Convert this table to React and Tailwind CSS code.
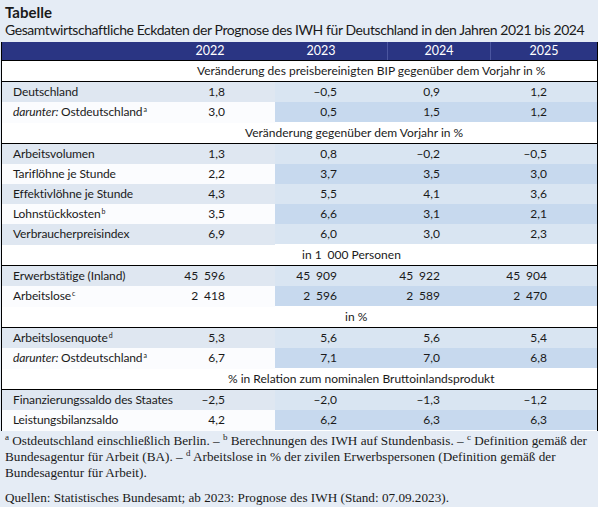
import React from 'react';

const sans = "font-['Lato',sans-serif]";

const rows = [
  { type: 'section', text: 'Veränderung des preisbereinigten BIP gegenüber dem Vorjahr in %', pl: 'pl-[195px]' },
  { label: 'Deutschland', v: ['1,8', '–0,5', '0,9', '1,2'] },
  { label: 'Ostdeutschland', pre: 'darunter:', sup: 'a', v: ['3,0', '0,5', '1,5', '1,2'] },
  { type: 'section', text: 'Veränderung gegenüber dem Vorjahr in %', pl: 'pl-[243px]' },
  { label: 'Arbeitsvolumen', v: ['1,3', '0,8', '–0,2', '–0,5'] },
  { label: 'Tariflöhne je Stunde', v: ['2,2', '3,7', '3,5', '3,0'] },
  { label: 'Effektivlöhne je Stunde', v: ['4,3', '5,5', '4,1', '3,6'] },
  { label: 'Lohnstückkosten', sup: 'b', v: ['3,5', '6,6', '3,1', '2,1'] },
  { label: 'Verbraucherpreisindex', v: ['6,9', '6,0', '3,0', '2,3'] },
  { type: 'section', text: 'in 1\u2002000 Personen', pl: 'pl-[300px]' },
  { label: 'Erwerbstätige (Inland)', v: ['45\u2002596', '45\u2002909', '45\u2002922', '45\u2002904'] },
  { label: 'Arbeitslose', sup: 'c', v: ['2\u2002418', '2\u2002596', '2\u2002589', '2\u2002470'] },
  { type: 'section', text: 'in %', pl: 'pl-[343px]' },
  { label: 'Arbeitslosenquote', sup: 'd', v: ['5,3', '5,6', '5,6', '5,4'] },
  { label: 'Ostdeutschland', pre: 'darunter:', sup: 'a', v: ['6,7', '7,1', '7,0', '6,8'] },
  { type: 'section', text: '% in Relation zum nominalen Bruttoinlandsprodukt', pl: 'pl-[226px]' },
  { label: 'Finanzierungssaldo des Staates', v: ['–2,5', '–2,0', '–1,3', '–1,2'] },
  { label: 'Leistungsbilanzsaldo', v: ['4,2', '6,2', '6,3', '6,3'] },
];

function Sup({ children, className = '' }) {
  return <span className={`relative -top-[4px] text-[7px] leading-none ${className}`}>{children}</span>;
}

function DataRow({ row, light }) {
  const base = light ? 'bg-[#dfe7f1]' : 'bg-[#fbfcfe]';
  const fc = light ? 'bg-[#d9e5f2]' : 'bg-[#c7d9ee]';
  return (
    <div className="grid grid-cols-[273px_112px_103px_107px] h-[20px] text-[12px] leading-[20px] text-[#1a1a1a]">
      <div className={`${base} flex justify-between pl-[11px] pr-[50px] whitespace-nowrap`}>
        <span className="tracking-[-0.1px]">
          {row.pre && <span className="italic">{row.pre} </span>}
          {row.label}
          {row.sup && <Sup className="ml-[1px]">{row.sup}</Sup>}
        </span>
        <span>{row.v[0]}</span>
      </div>
      {row.v.slice(1).map((x, i) => (
        <div key={i} className={`${fc} text-right pr-[50px] border-b border-white`}>{x}</div>
      ))}
    </div>
  );
}

export default function App() {
  let n = 0;
  const fsup = 'relative -top-[5px] text-[9px] leading-none';
  return (
    <div className="w-[600px] h-[514px] bg-white">
      <div className={`w-[598px] h-[507px] bg-[#e5ecf5] pt-[3px] ${sans} text-[#1a1a1a]`}>
        <div className="pl-[5px] text-[15px] font-bold leading-[18px]">Tabelle</div>
        <div className="pl-[5px] text-[14px] tracking-[-0.42px] leading-[18px] whitespace-nowrap">
          Gesamtwirtschaftliche Eckdaten der Prognose des IWH für Deutschland in den Jahren 2021 bis 2024
        </div>

        <div className="ml-[1px] mt-[3px] w-[597px] border-x border-b border-black">
          <div className="grid grid-cols-[163px_110px_112px_103px_107px] h-[18px] bg-[#2a3583] text-white text-[12.5px] leading-[18px]">
            <div />
            <div className="text-center pr-[20px]">2022</div>
            <div className="text-center pr-[20px]">2023</div>
            <div className="text-center border-l border-[#4b56a0]">2024</div>
            <div className="text-center border-l border-[#4b56a0]">2025</div>
          </div>
          {rows.map((row, i) => {
            if (row.type === 'section') {
              n = 0;
              return (
                <div key={i} className={`h-[22px] border-y border-black bg-white ${row.pl} text-[12px] leading-[20px] whitespace-nowrap`}>
                  {row.text}
                </div>
              );
            }
            n += 1;
            return <DataRow key={i} row={row} light={n % 2 === 1} />;
          })}
        </div>

        <div className="mt-[2px] pl-[5px] font-['Liberation_Serif',serif] text-[13.2px] leading-[16px] text-[#1a1a1a] whitespace-nowrap">
          <p>
            <span className={fsup}>a</span> Ostdeutschland einschließlich Berlin. – <span className={fsup}>b</span> Berechnungen des IWH auf Stundenbasis. – <span className={fsup}>c</span> Definition gemäß der
          </p>
          <p>
            Bundesagentur für Arbeit (BA). – <span className={fsup}>d</span> Arbeitslose in % der zivilen Erwerbspersonen (Definition gemäß der
          </p>
          <p>Bundesagentur für Arbeit).</p>
          <p className="mt-[9px]">Quellen: Statistisches Bundesamt; ab 2023: Prognose des IWH (Stand: 07.09.2023).</p>
        </div>
      </div>
    </div>
  );
}
